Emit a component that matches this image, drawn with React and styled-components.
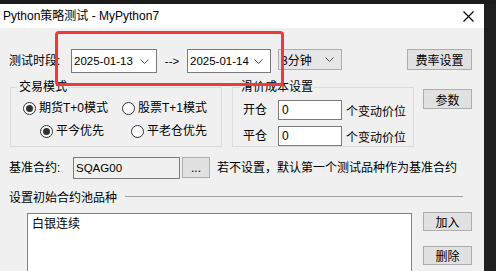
import styled, { createGlobalStyle } from 'styled-components';

const GlobalStyle = createGlobalStyle`
  body {
    margin: 0;
    background: #1f1f1f;
    font-family: "Liberation Sans", "Noto Sans CJK SC", sans-serif;
    font-size: 12px;
    color: #000;
  }
`

function Chevron() {
  return (
    <svg width="9" height="5" viewBox="0 0 9 5">
      <polyline points="0.5,0.5 4.5,4.5 8.5,0.5" fill="none" stroke="#4a4a4a" strokeWidth="1" />
    </svg>
  )
}

function Combo({ value, width, muted }) {
  return (
    <ComboBox $width={width} $muted={muted}>
      <span>{value}</span>
      <Chevron />
    </ComboBox>
  )
}

function Radio({ label, checked, width }) {
  return (
    <RadioItem $width={width}>
      <RadioCircle>{checked && <RadioDot />}</RadioCircle>
      {label}
    </RadioItem>
  )
}

function App() {
  return (
    <Screen>
      <GlobalStyle />
      <TopStrip />
      <Main>
        <Window>
          <TitleBar>
            <span>Python策略测试 - MyPython7</span>
            <svg width="11" height="11" viewBox="0 0 11 11">
              <path d="M0.5 0.5 L10.5 10.5 M10.5 0.5 L0.5 10.5" stroke="#000" strokeWidth="1.1" />
            </svg>
          </TitleBar>
          <Body>
            <Highlight />
            <DateRow>
              <Label $width={62}>测试时段:</Label>
              <Combo value="2025-01-13" width={86} />
              <Arrow>--&gt;</Arrow>
              <Combo value="2025-01-14" width={84} />
              <Gap $w={7} />
              <Combo value="3分钟" width={64} muted />
              <Button $width={65} $height={21} $left="auto">费率设置</Button>
            </DateRow>

            <GroupRow>
              <Group $width={212} $left={1}>
                <Legend>交易模式</Legend>
                <RadioRow $pad={12}>
                  <Radio label="期货T+0模式" checked width={99} />
                  <Radio label="股票T+1模式" />
                </RadioRow>
                <RadioRow $pad={29}>
                  <Radio label="平今优先" checked width={91} />
                  <Radio label="平老仓优先" />
                </RadioRow>
              </Group>
              <Group $width={182} $left={10}>
                <Legend>滑价成本设置</Legend>
                <SlipRow>
                  <Label $width={35}>开仓</Label>
                  <TextInput>0</TextInput>
                  <Unit>个变动价位</Unit>
                </SlipRow>
                <SlipRow>
                  <Label $width={35}>平仓</Label>
                  <TextInput>0</TextInput>
                  <Unit>个变动价位</Unit>
                </SlipRow>
              </Group>
              <Button $width={49} $height={20} $left="9px" $top={2}>参数</Button>
            </GroupRow>

            <BaseRow>
              <Label $width={64}>基准合约:</Label>
              <ReadInput>SQAG00</ReadInput>
              <Button $width={28} $height={21} $left="2px">...</Button>
              <Hint>若不设置，默认第一个测试品种作为基准合约</Hint>
            </BaseRow>

            <PoolHeader>
              <span>设置初始合约池品种</span>
              <Rule />
            </PoolHeader>

            <PoolRow>
              <ListBox>
                <ListItem>白银连续</ListItem>
              </ListBox>
              <ButtonColumn>
                <Button $width={49} $height={19}>加入</Button>
                <Button $width={49} $height={19}>删除</Button>
              </ButtonColumn>
            </PoolRow>
          </Body>
        </Window>
        <Side />
      </Main>
    </Screen>
  )
}

const Screen = styled.div`
  width: 496px;
  height: 271px;
  overflow: hidden;
  display: flex;
  flex-direction: column;
  background: #1f1f1f;
`

const TopStrip = styled.div`
  height: 4px;
  background: #1c1c1c;
`

const Main = styled.div`
  flex: 1;
  display: flex;
  min-height: 0;
`

const Window = styled.div`
  width: 484px;
  display: flex;
  flex-direction: column;
  background: #f0f0f0;
`

const Side = styled.div`
  flex: 1;
  background: #1f1f1f;
`

const TitleBar = styled.div`
  height: 24px;
  flex-shrink: 0;
  background: #fff;
  display: flex;
  align-items: center;
  justify-content: space-between;
  padding: 0 10px 0 3px;
  font-size: 12px;
  line-height: 14px;
`

const Body = styled.div`
  position: relative;
  flex: 1;
  overflow: hidden;
  padding: 21px 12px 0 9px;
`

const Highlight = styled.div`
  position: absolute;
  z-index: 2;
  left: 55px;
  top: 3px;
  width: 229px;
  height: 55px;
  box-sizing: border-box;
  border: 3px solid #ef3a3a;
  border-radius: 4px;
  pointer-events: none;
`

const DateRow = styled.div`
  display: flex;
  align-items: flex-start;
`

const Label = styled.div`
  width: ${({ $width }) => $width}px;
  flex-shrink: 0;
  line-height: 22px;
  white-space: nowrap;
  ${DateRow} & {
    line-height: 24px;
  }
`

const Gap = styled.div`
  width: ${({ $w }) => $w}px;
`

const ComboBox = styled.div`
  box-sizing: border-box;
  width: ${({ $width }) => $width}px;
  height: ${({ $muted }) => ($muted ? 21 : 24)}px;
  border: 1px solid ${({ $muted }) => ($muted ? '#adadad' : '#7a7a7a')};
  background: ${({ $muted }) => ($muted ? '#e6e6e6' : '#fff')};
  display: flex;
  align-items: center;
  justify-content: space-between;
  padding: 0 7px 0 2px;
  font-size: ${({ $muted }) => ($muted ? 12 : 11.5)}px;
  white-space: nowrap;
`

const Arrow = styled.div`
  width: 16px;
  margin: 0 7px;
  line-height: 24px;
  font-size: 11.5px;
  text-align: center;
`

const Button = styled.div`
  box-sizing: border-box;
  width: ${({ $width }) => $width}px;
  height: ${({ $height }) => $height}px;
  margin-left: ${({ $left }) => $left || 0};
  margin-top: ${({ $top }) => $top || 0}px;
  flex-shrink: 0;
  border: 1px solid #adadad;
  background: #e1e1e1;
  display: flex;
  align-items: center;
  justify-content: center;
  font-size: 12px;
`

const GroupRow = styled.div`
  display: flex;
  align-items: flex-start;
  margin-top: 14px;
`

const Group = styled.div`
  position: relative;
  box-sizing: border-box;
  width: ${({ $width }) => $width}px;
  height: 60px;
  margin-left: ${({ $left }) => $left}px;
  border: 1px solid #dcdcdc;
  padding-top: 11px;
  display: flex;
  flex-direction: column;
  gap: 4px;
`

const Legend = styled.div`
  position: absolute;
  top: -9px;
  left: 7px;
  padding: 0 1px;
  background: #f0f0f0;
  line-height: 16px;
`

const RadioRow = styled.div`
  display: flex;
  align-items: center;
  height: 16px;
  padding-left: ${({ $pad }) => $pad}px;
  margin-top: 1px;
  & + & {
    margin-top: 3px;
  }
`

const RadioItem = styled.div`
  display: flex;
  align-items: center;
  gap: 3px;
  width: ${({ $width }) => ($width ? `${$width}px` : 'auto')};
  white-space: nowrap;
  line-height: 16px;
`

const RadioCircle = styled.div`
  box-sizing: border-box;
  width: 13px;
  height: 13px;
  border-radius: 50%;
  border: 1px solid #333;
  background: #fff;
  display: flex;
  align-items: center;
  justify-content: center;
`

const RadioDot = styled.div`
  width: 7px;
  height: 7px;
  border-radius: 50%;
  background: #333;
`

const SlipRow = styled.div`
  display: flex;
  align-items: center;
  padding-left: 10px;
`

const TextInput = styled.div`
  box-sizing: border-box;
  width: 64px;
  height: 20px;
  border: 1px solid #7a7a7a;
  background: #fff;
  padding-left: 3px;
  line-height: 18px;
`

const Unit = styled.div`
  margin-left: 4px;
  white-space: nowrap;
`

const BaseRow = styled.div`
  display: flex;
  align-items: flex-start;
  margin-top: 10px;
`

const ReadInput = styled.div`
  box-sizing: border-box;
  width: 107px;
  height: 22px;
  border: 1px solid #7a7a7a;
  background: #f0f0f0;
  padding-left: 2px;
  line-height: 20px;
  font-size: 11.5px;
`

const Hint = styled.div`
  margin-left: 7px;
  line-height: 22px;
  white-space: nowrap;
`

const PoolHeader = styled.div`
  display: flex;
  align-items: center;
  height: 14px;
  margin-top: 10px;
  padding-right: 9px;
  white-space: nowrap;
`

const Rule = styled.div`
  flex: 1;
  height: 1px;
  margin-left: 8px;
  background: #a0a0a0;
`

const PoolRow = styled.div`
  display: flex;
  align-items: flex-start;
  margin-top: 9px;
`

const ListBox = styled.div`
  box-sizing: border-box;
  width: 385px;
  height: 80px;
  margin-left: 18px;
  margin-top: 1px;
  border: 1px solid #828282;
  background: #fff;
  padding: 2px 4px;
`

const ListItem = styled.div`
  line-height: 16px;
`

const ButtonColumn = styled.div`
  display: flex;
  flex-direction: column;
  gap: 15px;
  margin-left: 11px;
`

export default App;
